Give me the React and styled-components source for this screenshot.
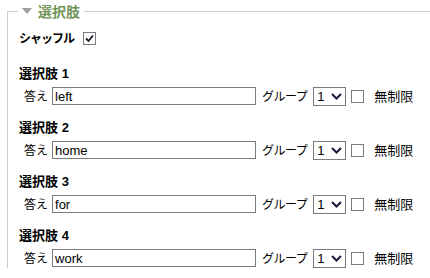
import React from 'react'
import styled, { createGlobalStyle } from 'styled-components'

const GlobalStyle = createGlobalStyle`
  html, body {
    margin: 0;
    padding: 0;
    background: #ffffff;
    overflow: hidden;
  }
  body {
    font-family: "Liberation Sans", Arial, "Noto Sans CJK JP", sans-serif;
    font-size: 13px;
    color: #000000;
  }
`

const Fieldset = styled.fieldset`
  margin: 2px 0 0 7px;
  padding: 10px 0 0 11px;
  border: none;
  border-top: 1px solid #cccccc;
  border-left: 1px solid #cccccc;
  min-width: 0;
`

const Legend = styled.legend`
  display: flex;
  align-items: center;
  gap: 6px;
  margin-left: -1px;
  padding: 0 4px;
  font-family: "Noto Sans CJK JP", sans-serif;
  font-size: 14px;
  font-weight: 700;
  line-height: 18px;
  color: #6f9458;
`

const Arrow = styled.span`
  width: 0;
  height: 0;
  border-left: 5px solid transparent;
  border-right: 5px solid transparent;
  border-top: 6px solid #a0a0a0;
`

const ShuffleRow = styled.div`
  display: flex;
  align-items: center;
  gap: 9px;
  height: 16px;
  margin-bottom: 20px;
`

const BoldLabel = styled.span`
  font-family: "Noto Sans CJK JP", sans-serif;
  font-weight: 700;
  font-size: 12px;
  letter-spacing: -1px;
  line-height: 16px;
`

const Choice = styled.div`
  margin-bottom: 14px;

  &:last-child {
    margin-bottom: 0;
  }
`

const ChoiceTitle = styled.div`
  font-family: "Liberation Sans", Arial, "Noto Sans CJK JP", sans-serif;
  font-weight: 700;
  font-size: 13px;
  line-height: 16px;
  margin-bottom: 4px;
`

const Row = styled.div`
  display: flex;
  align-items: center;
  height: 20px;
  padding-left: 5px;
`

const Label = styled.span`
  font-family: "Noto Sans CJK JP", sans-serif;
  font-size: ${p => p.$size || 12}px;
  letter-spacing: ${p => p.$ls || 0}px;
  line-height: 16px;
`

const TextInput = styled.input`
  box-sizing: border-box;
  width: 204px;
  height: 18px;
  margin: 0 6px 0 4px;
  padding: 0 2px;
  border: 1px solid #7a7a7a;
  font-family: "Liberation Sans", Arial, sans-serif;
  font-size: 13px;
  color: #000000;
  outline: none;
`

const SelectWrap = styled.span`
  position: relative;
  display: inline-block;
  margin-left: 6px;
`

const Select = styled.select`
  appearance: none;
  box-sizing: border-box;
  width: 33px;
  height: 19px;
  padding: 0 0 0 3px;
  border: 1px solid #7a7a7a;
  border-radius: 0;
  background: #ffffff;
  font-family: "Liberation Sans", Arial, sans-serif;
  font-size: 13px;
  color: #000000;
  display: block;
`

const Chevron = styled.svg`
  position: absolute;
  right: 4px;
  top: 6px;
  pointer-events: none;
`

const Box = styled.span`
  box-sizing: border-box;
  display: inline-flex;
  align-items: center;
  justify-content: center;
  width: 13px;
  height: 13px;
  border: 1px solid #7a7a7a;
  background: #ffffff;
  margin: ${p => p.$m || '0'};
`

function Check({ checked, m }) {
  return (
    <Box $m={m}>
      {checked && (
        <svg width="9" height="9" viewBox="0 0 9 9">
          <path d="M1 4.5 L3.5 7 L8 1.5" fill="none" stroke="#1a1a2e" strokeWidth="1.8" />
        </svg>
      )}
    </Box>
  )
}

const choices = ['left', 'home', 'for', 'work']

export default function App() {
  return (
    <>
      <GlobalStyle />
      <Fieldset>
        <Legend>
          <Arrow />
          選択肢
        </Legend>
        <ShuffleRow>
          <BoldLabel>シャッフル</BoldLabel>
          <Check checked />
        </ShuffleRow>
        {choices.map((c, i) => (
          <Choice key={c}>
            <ChoiceTitle>選択肢 {i + 1}</ChoiceTitle>
            <Row>
              <Label>答え</Label>
              <TextInput defaultValue={c} />
              <Label $ls={-0.5}>グループ</Label>
              <SelectWrap>
                <Select defaultValue="1">
                  <option value="1">1</option>
                </Select>
                <Chevron width="11" height="7" viewBox="0 0 11 7">
                  <path d="M1 1 L5.5 5.5 L10 1" fill="none" stroke="#1a1a3a" strokeWidth="2" />
                </Chevron>
              </SelectWrap>
              <Check m="0 10px 0 5px" />
              <Label $size={13}>無制限</Label>
            </Row>
          </Choice>
        ))}
      </Fieldset>
    </>
  )
}
